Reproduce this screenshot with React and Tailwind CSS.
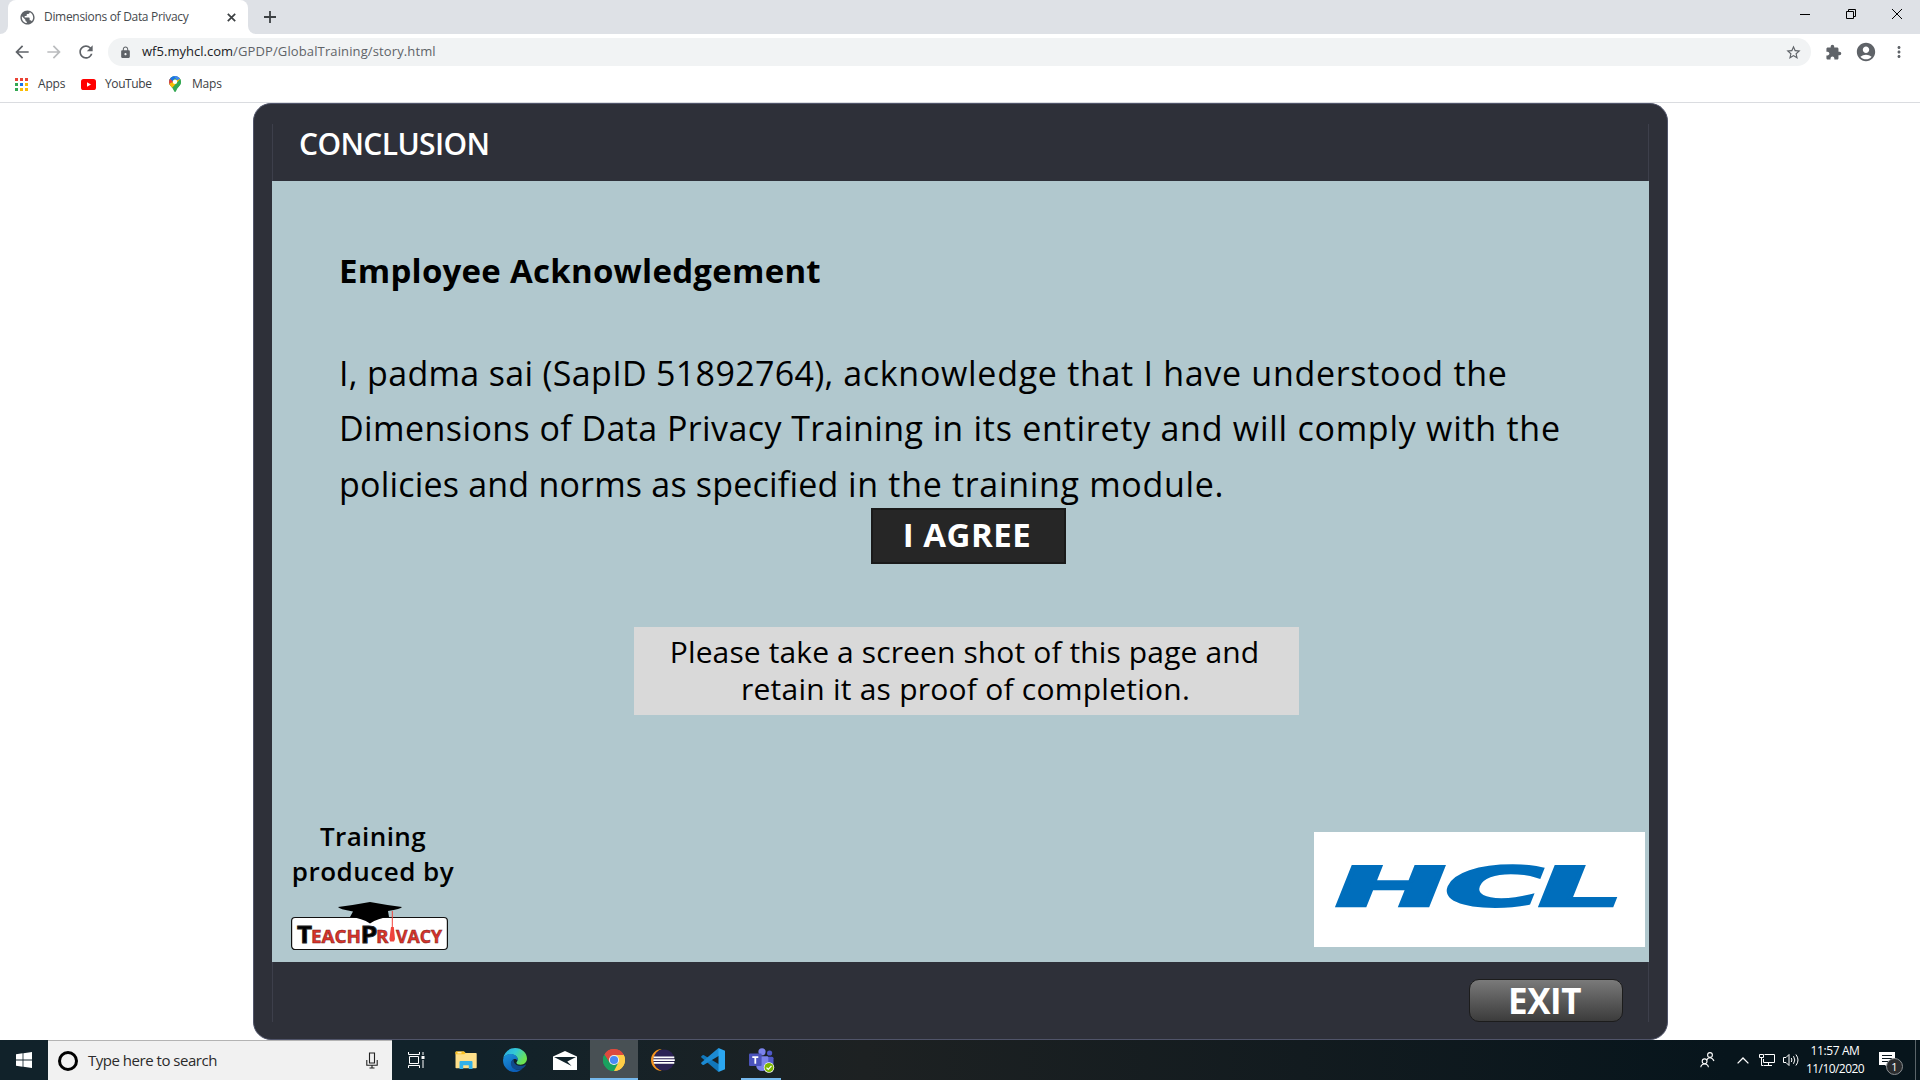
import {
  MdArrowBack,
  MdArrowForward,
  MdRefresh,
  MdLock,
  MdStarBorder,
  MdExtension,
  MdAccountCircle,
  MdMoreVert,
  MdPublic,
} from "react-icons/md";

/* ---------- Browser icons ---------- */

function AppsGrid() {
  const colors = ["#ea4335", "#ea4335", "#ea4335", "#34a853", "#1a73e8", "#fbbc04", "#34a853", "#fbbc04", "#fbbc04"];
  return (
    <span className="grid h-[13px] w-[13px] shrink-0 grid-cols-3 gap-[2px]">
      {colors.map((c, i) => (
        <span key={i} style={{ background: c }} />
      ))}
    </span>
  );
}

function YouTubeIcon() {
  return (
    <svg width="15" height="11" viewBox="0 0 15 11" className="shrink-0">
      <rect width="15" height="11" rx="2.6" fill="#f00" />
      <path d="M6 3.2v4.6l4-2.3z" fill="#fff" />
    </svg>
  );
}

function MapsIcon() {
  return (
    <svg width="12" height="16" viewBox="0 0 24 32" className="shrink-0">
      <defs>
        <clipPath id="pin">
          <path d="M12 0a12 12 0 0 1 12 12c0 8-8 10-10 18q-2 4-4 0C8 22 0 20 0 12A12 12 0 0 1 12 0z" />
        </clipPath>
      </defs>
      <g clipPath="url(#pin)">
        <rect width="24" height="32" fill="#34a853" />
        <path d="M0 0h16L0 18z" fill="#1a73e8" />
        <path d="M0 4l8 7-6 10-4-4z" fill="#ea4335" />
        <path d="M10 0h14v6l-8 3z" fill="#4285f4" />
        <path d="M24 5L4 26-2 16l8-3z" fill="#fbbc04" />
        <path d="M24 4L7 25l8 8 12-15z" fill="#34a853" />
      </g>
      <circle cx="12" cy="11.5" r="4.4" fill="#fff" />
    </svg>
  );
}

/* ---------- Taskbar icons ---------- */

function WindowsLogo() {
  return (
    <svg width="16" height="16" viewBox="0 0 16 16" fill="#fff">
      <path d="M0 2.2L6.6 1.3V7.6H0zM7.4 1.2L16 0V7.6H7.4zM0 8.4H6.6V14.7L0 13.8zM7.4 8.4H16V16L7.4 14.8z" />
    </svg>
  );
}

function MicIcon() {
  return (
    <svg width="12" height="17" viewBox="0 0 12 17" fill="none" stroke="#222" strokeWidth="1.1">
      <path d="M3.5 1h5v10h-5zM.8 8v5.3h10.4V8M6 13.3v2.6M3.5 16h5" />
    </svg>
  );
}

function TaskViewIcon() {
  return (
    <svg width="17" height="16" viewBox="0 0 17 16" fill="none" stroke="#fff">
      <path d="M1.5 4.5h9v7h-9zM.5 0v2.500h11V0M.5 16v-2.500h11V16M15 0v3M15 8v8" />
      <path d="M13.500 4h3v3h-3z" fill="#fff" stroke="none" />
    </svg>
  );
}

function FolderIcon() {
  return (
    <svg width="22" height="18" viewBox="0 0 22 18">
      <path d="M.5 1.500q0-1 1-1H9l1.500 1.500H21q.7 0 .7.7v13.800q0 .7-.7.7H1.200q-.7 0-.7-.7z" fill="#ffe08a" />
      <path d="M.5 1.200Q.5.5 1.200.5H9l1.500 1.500L9.500 3.300H.5z" fill="#fcc01e" />
      <path d="M2.500 1.300h4v1h-4z" fill="#fff" />
      <path d="M4.500 18v-7q0-1 1-1h11q1 0 1 1v7h-3.700v-3.700H8.200V18z" fill="#32b1ea" />
    </svg>
  );
}

function EdgeIcon() {
  return (
    <svg width="24" height="24" viewBox="0 0 24 24">
      <defs>
        <linearGradient id="edgeTop" x1="0" y1="0" x2="1" y2=".5">
          <stop offset="0" stopColor="#2aa5e4" />
          <stop offset=".5" stopColor="#33c9d6" />
          <stop offset="1" stopColor="#6de34f" />
        </linearGradient>
        <linearGradient id="edgeLow" x1="0" y1="0" x2=".6" y2="1">
          <stop offset="0" stopColor="#1b93dc" />
          <stop offset="1" stopColor="#0b5cb5" />
        </linearGradient>
      </defs>
      <path d="M.2 10.500C1 4.500 6 0 12.100 0 19 0 24 5 24 10.600c0 3.800-3 6.100-6.300 6.100-2.700 0-4.300-1-4.300-2 0-.8 1.300-1.300 1.300-3.300 0-2.600-3-5.200-7-5.200-4 0-6.600 2-7.500 4.300z" fill="url(#edgeTop)" />
      <path d="M.1 11.500C.6 8 4 5.900 7.700 5.900c4.200 0 7.100 2.700 7.100 5.300 0 .6-.1 1-.3 1.500-.6-1.400-2-2-3.300-1.600-2.300.8-3.400 3.300-2.400 6.200 1.400 4 6 5.500 10.300 3.600C17 23 14.500 24 12 24 5 24-.5 18.500.1 11.500z" fill="url(#edgeLow)" />
      <path d="M10.800 11.200c-2.500 1-3.600 3.700-2.400 6.700 1.500 3.700 6 4.800 10.100 3 2-.9 3.500-2.400 4.400-4-.3-.5-.7-.3-1.200 0-1 .5-2.700 1-4.700.9-3.800-.2-7-2.900-6.200-6.600z" fill="#114a8b" />
    </svg>
  );
}

function MailIcon() {
  return (
    <svg width="24" height="19" viewBox="0 0 24 19">
      <path d="M0 5.500L12 0l12 5.500V19H0z" fill="#fff" />
      <path d="M1 6h22l-8.700 4.500 4.300 4.500L1 6z" fill="#10222a" />
    </svg>
  );
}

function ChromeIcon() {
  return (
    <svg width="22" height="22" viewBox="0 0 22 22">
      <path d="M11 11L1.470 5.500A11 11 0 0 1 20.530 5.500z" fill="#dd4b3e" />
      <path d="M11 11L20.530 5.500A11 11 0 0 1 11 22z" fill="#ffcd46" />
      <path d="M11 11L11 22A11 11 0 0 1 1.470 5.500z" fill="#1aa15f" />
      <path d="M11 5.900H20.700A11 11 0 0 1 11 22L15.400 13.600z" fill="#ffcd46" />
      <path d="M6.600 13.500L1.470 5.500A11 11 0 0 0 11 22L15.400 13.600z" fill="#1aa15f" />
      <path d="M11 5.900H20.700A11 11 0 0 0 1.470 5.500L6.600 13.500z" fill="#dd4b3e" />
      <circle cx="11" cy="11" r="5.100" fill="#f1f1f1" />
      <circle cx="11" cy="11" r="4.100" fill="#4a8af4" />
    </svg>
  );
}

function EclipseIcon() {
  return (
    <svg width="24" height="22" viewBox="0 0 24 22">
      <path d="M11 0A11 11 0 0 0 11 22A11.500 11.500 0 0 1 11 0z" fill="#f7941e" />
      <circle cx="13" cy="11" r="10.600" fill="#2c2255" />
      <path d="M2.700 7.500h20.600v1.800H2.500zM2.300 10.300h21.500v1.800H2.300zM2.600 13.100h20.700v1.600H3z" fill="#fff" />
    </svg>
  );
}

function VsCodeIcon() {
  return (
    <svg width="24" height="24" viewBox="0 0 24 24">
      <path d="M1.500 7.200L.4 8.200q-.6.600 0 1.200L17.500 24 20 17.500 3 7.200q-.8-.6-1.500 0z" fill="#1177bb" />
      <path d="M1.500 16.800L.4 15.800q-.6-.6 0-1.200L17.500 0 20 6.500 3 16.800q-.8.600-1.500 0z" fill="#1c8ad2" />
      <path d="M17.500 0L24 2.800V21.200L17.500 24z" fill="#2ba6f0" />
    </svg>
  );
}

function TeamsIcon() {
  return (
    <svg width="26" height="25" viewBox="0 0 26 25">
      <circle cx="13" cy="3.800" r="3.600" fill="#7b83eb" />
      <circle cx="20.600" cy="5" r="2.600" fill="#5059c9" />
      <path d="M17 8.800h6q1.500 0 1.500 1.500v5q0 4-4 4.500z" fill="#5059c9" />
      <path d="M8 8.300h10q1.300 0 1.300 1.300v7q0 6.400-5.800 6.400T7 17z" fill="#7b83eb" />
      <rect y="5.500" width="12.600" height="12.600" rx="1" fill="#4b53bc" />
      <path d="M3.300 8.200h6v1.700H7.200v5.900H5.400V9.900H3.300z" fill="#fff" />
      <circle cx="20" cy="19.500" r="5.200" fill="#fff" />
      <circle cx="20" cy="19.500" r="4.500" fill="#7db700" />
      <path d="M17.500 19.600l1.800 1.800 3.200-3.500" fill="none" stroke="#fff" strokeWidth="1.300" />
    </svg>
  );
}

function PeopleIcon() {
  return (
    <svg width="15" height="16" viewBox="0 0 15 16" fill="none" stroke="#fff" strokeWidth="1.100">
      <circle cx="10" cy="3" r="2.400" />
      <path d="M6.800 8.200Q7.500 5.800 10 5.800t4 3.200" />
      <circle cx="4.600" cy="9.300" r="2.400" />
      <path d="M.8 15.200Q1.200 12 4.600 12t3.800 3.200" />
    </svg>
  );
}

function NetworkIcon() {
  return (
    <svg width="17" height="14" viewBox="0 0 17 14" fill="none" stroke="#fff">
      <path d="M5.500 1.500h10v8h-11V6M9.500 9.500v3M5 12.500h8M.5 1.500h4v3h-4zM2.500 4.500v8h2" />
    </svg>
  );
}

function SpeakerIcon() {
  return (
    <svg width="17" height="14" viewBox="0 0 17 14" fill="none" stroke="#fff">
      <path d="M.5 4.500H3l3-3v11l-3-3H.5zM8.300 5q1.200 2 0 4M10.500 3.200q2.600 3.800 0 7.600M12.900 1.500q4.200 5.500 0 11" />
    </svg>
  );
}

/* ---------- Logos ---------- */

function TeachPrivacyLogo() {
  return (
    <svg width="160" height="52" viewBox="0 0 160 52" fontFamily="'Open Sans', sans-serif" fontWeight="700">
      <rect x="1.600" y="17.500" width="155.800" height="32" rx="3.500" fill="#fff" stroke="#111" strokeWidth="1.200" />
      <path d="M48 7Q64 5 80 2q16 3 32 5-1 2-14 4l1 6q-11 1-19 6.500Q72 18 60 17l3-5.500Q49 9 48 7z" fill="#000" />
      <g stroke="#222" strokeWidth=".9">
        <text x="7" y="42.500" fontSize="23.500" textLength="15" lengthAdjust="spacingAndGlyphs">T</text>
        <text x="70.500" y="42.500" fontSize="23.500" textLength="17" lengthAdjust="spacingAndGlyphs">P</text>
      </g>
      <g fill="#d9342b" stroke="#7a1d18" strokeWidth=".5" fontSize="18">
        <text x="21" y="42.500" textLength="50" lengthAdjust="spacingAndGlyphs">EACH</text>
        <text x="86" y="42.500" textLength="12.500" lengthAdjust="spacingAndGlyphs">R</text>
        <text x="106" y="42.500" textLength="46" lengthAdjust="spacingAndGlyphs">VACY</text>
      </g>
      <path d="M102.300 11v18" stroke="#f0443c" strokeWidth="1" />
      <path d="M101 27h2.800l1.200 12-1 2.500h-3.800l-.8-2.500z" fill="#f0443c" />
    </svg>
  );
}

function HclLogo() {
  const letter = { fontSize: 54.5, stroke: "#006ebc", strokeWidth: 2.4 };
  return (
    <svg width="331" height="115" viewBox="0 0 331 115" fontFamily="'DejaVu Sans', sans-serif" fontWeight="700" fill="#006ebc">
      <text {...letter} transform="matrix(2.48 0 -.4 1 12 74)">H</text>
      <text {...letter} transform="matrix(2.48 0 -.4 1 122 74)">C</text>
      <text {...letter} transform="matrix(2.46 0 -.4 1 215 74)">L</text>
    </svg>
  );
}

/* ---------- Page sections ---------- */

function TabStrip() {
  return (
    <div className="flex h-[34px] items-end bg-[#dee1e6]">
      <div className="flex w-2 self-stretch bg-white">
        <div className="w-2 rounded-br-lg bg-[#dee1e6]" />
      </div>
      <div className="flex h-full w-[240px] items-center rounded-t-lg bg-white pl-[11px] pr-[8px]">
        <MdPublic className="size-[17px] shrink-0 text-[#5f6368]" />
        <span className="ml-[8px] whitespace-nowrap text-[12px] tracking-[-0.31px] text-[#45494d]">Dimensions of Data Privacy</span>
        <svg width="9" height="9" viewBox="0 0 9 9" className="ml-auto mr-[4px]" stroke="#3c4043" strokeWidth="1.700">
          <path d="M.8.8l7.400 7.400M8.200.8L.8 8.200" />
        </svg>
      </div>
      <div className="flex flex-1 self-stretch bg-white">
        <div className="flex flex-1 items-center rounded-bl-lg bg-[#dee1e6]">
          <svg width="12" height="12" viewBox="0 0 12 12" className="ml-[16px]" stroke="#3c4043" strokeWidth="1.800">
            <path d="M6 0v12M0 6h12" />
          </svg>
          <div className="ml-auto flex items-center pb-[6px] pr-[18px]">
            <svg width="10" height="10" viewBox="0 0 10 10" stroke="#000" className="mr-[36px]">
              <path d="M0 5.500h10" />
            </svg>
            <svg width="10" height="10" viewBox="0 0 10 10" fill="none" stroke="#000" className="mr-[36px]">
              <path d="M.5 2.500h7v7h-7zM2.500 2.500v-2h7v7h-2" />
            </svg>
            <svg width="10" height="10" viewBox="0 0 10 10" stroke="#000">
              <path d="M0 0l10 10M10 0L0 10" />
            </svg>
          </div>
        </div>
      </div>
    </div>
  );
}

function AddressBar() {
  return (
    <div className="flex h-[36px] items-center pl-[12px] pr-[12px] text-[#5f6368]">
      <MdArrowBack className="size-[20px]" />
      <MdArrowForward className="ml-[12px] size-[20px] text-[#babcbe]" />
      <MdRefresh className="ml-[12px] size-[20px]" />
      <div className="ml-[12px] flex h-[28px] flex-1 items-center rounded-full bg-[#f1f3f4] pl-[11px] pr-[9px]">
        <MdLock className="size-[13px]" />
        <span className="ml-[10px] whitespace-nowrap text-[13px] tracking-[0.02px] text-[#202124]">wf5.myhcl.com</span>
        <span className="whitespace-nowrap text-[13px] tracking-[0.12px]">/GPDP/GlobalTraining/story.html</span>
        <MdStarBorder className="ml-auto size-[17px]" />
      </div>
      <MdExtension className="ml-[14px] size-[17px]" />
      <MdAccountCircle className="ml-[13px] size-[22px]" />
      <MdMoreVert className="ml-[13px] size-[18px]" />
    </div>
  );
}

function BookmarksBar() {
  return (
    <div className="flex h-[33px] items-center border-b border-[#dadce0] pb-[4px] pl-[15px] text-[12px] text-[#3c4043]">
      <AppsGrid />
      <span className="ml-[10px] w-[43px] tracking-[-0.2px]">Apps</span>
      <YouTubeIcon />
      <span className="ml-[9px] w-[64px] tracking-[-0.4px]">YouTube</span>
      <MapsIcon />
      <span className="ml-[11px] tracking-[-0.2px]">Maps</span>
    </div>
  );
}

function Course() {
  return (
    <div className="flex h-[937px] w-[1415px] flex-col rounded-[18px] border border-[#50546a] bg-[#2e3039] px-[18px]">
      <header className="flex h-[77px] shrink-0 flex-col pt-[20px]">
        <div className="flex flex-1 items-center border-x border-[#3d3f4b] pb-[17px] pl-[26px]">
          <h1 className="text-[30px] font-semibold leading-[40px] tracking-[-0.6px] text-white">CONCLUSION</h1>
        </div>
      </header>

      <main className="flex h-[781px] shrink-0 flex-col bg-[#b1c8ce] text-black">
        <div className="pl-[67px] pt-[62px]">
          <h2 className="text-[33px] font-bold leading-[56px] tracking-[0.260px]">Employee Acknowledgement</h2>
          <div className="mt-[46.500px] whitespace-nowrap text-[34px] leading-[55.500px]">
            <p>
              <span className="tracking-[0.320px]">I, padma sai (SapID 51892764),</span>
              <span className="tracking-[0.700px]"> acknowledge that I have understood the</span>
            </p>
            <p>
              <span className="tracking-[0.420px]">Dimensions of Data Privacy Training</span>
              <span className="tracking-[0.740px]"> in its entirety and will comply with the</span>
            </p>
            <p>
              <span className="tracking-[0.200px]">policies and norms as specified</span>
              <span className="tracking-[0.680px]"> in the training module.</span>
            </p>
          </div>
        </div>
        <button className="-mt-[4px] ml-[599px] flex h-[56px] w-[195px] items-center justify-center border-2 border-[#1a1a1a] bg-[#262626] pb-[4px] pr-[3px] text-[33px] font-bold leading-none tracking-[0.500px] text-white">
          I AGREE
        </button>
        <div className="ml-[361.500px] mt-[63px] h-[88px] w-[665px] bg-[#d9d9d9] pr-[3px] pt-[6px] text-center text-[30px] leading-[37.400px]">
          <div className="tracking-[0.120px]">Please take a screen shot of this page and</div>
          <div className="pl-[2px] tracking-[0.240px]">retain it as proof of completion.</div>
        </div>
        <div className="flex flex-1 items-end justify-between pl-[18px] pr-[4px]">
          <div className="flex w-[166px] flex-col pb-[10px]">
            <div className="text-center text-[26px] font-semibold leading-[35px]">
              <div className="tracking-[0.400px]">Training</div>
              <div className="whitespace-nowrap tracking-[0.500px]">produced by</div>
            </div>
            <div className="mt-[11px]">
              <TeachPrivacyLogo />
            </div>
          </div>
          <div className="mb-[15px] h-[115px] w-[331px] bg-white">
            <HclLogo />
          </div>
        </div>
      </main>

      <footer className="flex flex-1 flex-col pb-[17px]">
        <div className="flex flex-1 justify-end border-x border-[#3d3f4b] pr-[25px] pt-[17px]">
          <button className="flex h-[43px] w-[154px] items-center justify-center rounded-[10px] border border-[#1c1c1c] bg-linear-to-b from-[#7a7a7a] to-[#3c3c3c] pr-[3px] text-[35px] font-bold leading-none tracking-[-0.500px] text-white">
            EXIT
          </button>
        </div>
      </footer>
    </div>
  );
}

const pinned = [
  { name: "folder", icon: <FolderIcon /> },
  { name: "edge", icon: <EdgeIcon /> },
  { name: "mail", icon: <MailIcon /> },
  { name: "chrome", icon: <ChromeIcon />, cell: "bg-[#485054] border-b-2 border-[#76b9ed] pt-[2px]" },
  { name: "eclipse", icon: <EclipseIcon /> },
  { name: "vscode", icon: <VsCodeIcon /> },
  { name: "teams", icon: <TeamsIcon />, running: true },
];

function Taskbar() {
  return (
    <div className="flex h-[40px] items-stretch bg-linear-to-r from-[#11222a] from-25% via-[#1d2122] via-45% to-[#07151c] to-90% text-white">
      <div className="flex w-[48px] items-center justify-center">
        <WindowsLogo />
      </div>
      <div className="flex w-[344px] items-center border-t border-[#b3b3b3] bg-[#f1f1f1] pl-[10px] pr-[14px]">
        <div className="size-[20px] rounded-full border-[3px] border-black" />
        <span className="ml-[10px] text-[15px] tracking-[-0.480px] text-[#2b2b2b]">Type here to search</span>
        <div className="ml-auto">
          <MicIcon />
        </div>
      </div>
      <div className="flex gap-[1.400px]">
        <div className="flex w-[48px] items-center justify-center">
          <TaskViewIcon />
        </div>
        {pinned.map((app) => (
          <div key={app.name} className={`relative flex w-[48px] items-center justify-center ${app.cell ?? "pl-[1px]"}`}>
            {app.icon}
            {app.running && <div className="absolute bottom-0 left-[3px] h-[2px] w-[40px] bg-[#76b9ed]" />}
          </div>
        ))}
      </div>
      <div className="ml-auto flex items-center">
        <PeopleIcon />
        <svg width="12" height="7" viewBox="0 0 12 7" fill="none" stroke="#fff" strokeWidth="1.300" className="ml-[22px]">
          <path d="M.6 6.400L6 1l5.400 5.400" />
        </svg>
        <span className="ml-[10px]">
          <NetworkIcon />
        </span>
        <span className="ml-[7px]">
          <SpeakerIcon />
        </span>
        <div className="ml-[5px] w-[60px] whitespace-nowrap text-center text-[12px] leading-[18px]">
          <div className="tracking-[-0.380px]">11:57 AM</div>
          <div className="tracking-[-0.560px]">11/10/2020</div>
        </div>
        <div className="relative ml-[14px]">
          <svg width="16" height="16" viewBox="0 0 16 16">
            <path d="M0 0h16v13H9v3l-3-3H0z" fill="#fff" />
            <path d="M3 3.500h10M3 6.500h10M3 9.500h6" stroke="#0a1820" />
          </svg>
          <div className="absolute left-[7px] top-[6px] flex size-[17px] items-center justify-center rounded-full border border-[#8a8f92] bg-[#2a2c2e] text-[11px] leading-none">
            1
          </div>
        </div>
        <div className="ml-[20px] h-[40px] w-[5px] border-l border-[#5a6469]" />
      </div>
    </div>
  );
}

export default function App() {
  return (
    <div className="flex h-[1080px] w-[1920px] flex-col overflow-hidden bg-white font-['Open_Sans','Noto_Sans',sans-serif]">
      <TabStrip />
      <AddressBar />
      <BookmarksBar />
      <div className="flex h-[937px] shrink-0 pl-[253px]">
        <Course />
      </div>
      <Taskbar />
    </div>
  );
}
